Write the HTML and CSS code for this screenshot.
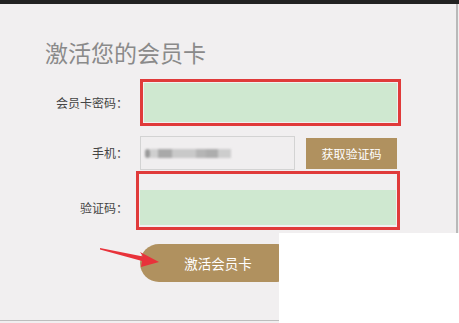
FILE: index.html
```html
<!DOCTYPE html>
<html lang="zh-CN">
<head>
<meta charset="utf-8">
<title>激活您的会员卡</title>
<link rel="stylesheet" href="styles.css">
</head>
<body>
<div class="topbar"></div>
<div class="panel">
  <h1 class="title">激活您的会员卡</h1>
  <div class="row row-card">
    <label class="label">会员卡密码<span class="colon">：</span></label>
    <div class="mark mark-card"><div class="field-green"></div></div>
  </div>
  <div class="row row-phone">
    <label class="label">手机<span class="colon">：</span></label>
    <div class="phone-input">
      <div class="blur-text">
        <span class="b b1"></span><span class="b b2"></span><span class="b b3"></span><span class="b b4"></span><span class="b b5"></span><span class="b b6"></span><span class="b b7"></span>
      </div>
    </div>
    <button class="btn-code">获取验证码</button>
  </div>
  <div class="row row-verify">
    <label class="label label-verify">验证码<span class="colon">：</span></label>
    <div class="mark mark-verify"><div class="field-green field-verify"></div></div>
  </div>
  <div class="row row-submit">
    <button class="btn-submit">激活会员卡</button>
  </div>
</div>
<svg class="arrow" width="64" height="26" viewBox="0 0 64 26">
  <polygon points="2,3 45,11.5 42,7 61,17 43,22 44,16 2,4.5" fill="#e8323a"/>
</svg>
<div class="cover"></div>
</body>
</html>
```
FILE: styles.css
```css
html, body {
  margin: 0;
  padding: 0;
}
body {
  width: 459px;
  height: 323px;
  overflow: hidden;
  background: #f1eff0;
  font-family: "Noto Sans CJK SC", "Noto Sans", sans-serif;
  position: relative;
}
.topbar {
  height: 4px;
  background: #222222;
}
.panel {
  width: 456px;
  height: 316px;
  border-right: 2px solid #b9b9b9;
  border-bottom: 1px solid #bdbdbd;
  display: flex;
  flex-direction: column;
}
.title {
  margin: 37px 0 0 45px;
  font-size: 23px;
  line-height: 23px;
  font-weight: normal;
  color: #8a8a8a;
  letter-spacing: 0;
}
.row {
  display: flex;
  align-items: center;
}
.label {
  width: 128px;
  margin-right: 2px;
  flex: none;
  text-align: right;
  font-size: 12px;
  line-height: 14px;
  color: #444444;
}
.colon {
  font-family: "Noto Sans CJK TC", "Noto Sans CJK SC", sans-serif;
}
.row-card {
  margin-top: 15px;
}
.mark {
  border: 3px solid #e03a3a;
  box-sizing: border-box;
}
.mark-card {
  margin-left: 10px;
  width: 261px;
  height: 47px;
  padding: 1px 1px;
  display: flex;
}
.field-green {
  flex: 1;
  background: #cfe8d0;
}
.row-phone {
  margin-top: 10px;
  height: 34px;
}
.phone-input {
  margin-left: 10px;
  width: 155px;
  height: 34px;
  box-sizing: border-box;
  border: 1px solid #d3d3d3;
  background: #f0eeef;
  display: flex;
  align-items: center;
  padding-left: 4px;
}
.blur-text {
  display: flex;
  align-items: center;
  height: 10px;
  filter: blur(0.9px);
}
.b {
  display: block;
  height: 9px;
}
.b1 { width: 5px; background: #9a9a9a; border-radius: 3px; }
.b2 { width: 8px; background: #cfcfcf; }
.b3 { width: 14px; background: #a9a9a9; }
.b4 { width: 24px; background: #c9c9c9; }
.b5 { width: 10px; background: #b5b5b5; }
.b6 { width: 12px; background: #adadad; }
.b7 { width: 13px; background: #cdcdcd; }
.btn-code {
  margin-left: 11px;
  width: 91px;
  height: 31px;
  border: none;
  background: #b0915f;
  color: #ffffff;
  font-family: inherit;
  font-size: 12px;
  padding: 0;
}
.row-verify {
  margin-top: 1px;
  align-items: flex-start;
}
.label-verify {
  padding-top: 30px;
}
.mark-verify {
  margin-left: 6px;
  width: 264px;
  height: 59px;
  padding: 16px 1px 2px 1px;
  display: flex;
}
.row-submit {
  margin-top: 14px;
}
.btn-submit {
  margin-left: 140px;
  width: 156px;
  height: 38px;
  border: none;
  border-radius: 19px;
  background: #b0915f;
  color: #ffffff;
  font-family: inherit;
  font-size: 13.5px;
  padding: 0;
}
.arrow {
  position: absolute;
  left: 98px;
  top: 245px;
}
.cover {
  position: absolute;
  left: 279px;
  top: 233px;
  right: 0;
  bottom: 0;
  background: #ffffff;
}
```
